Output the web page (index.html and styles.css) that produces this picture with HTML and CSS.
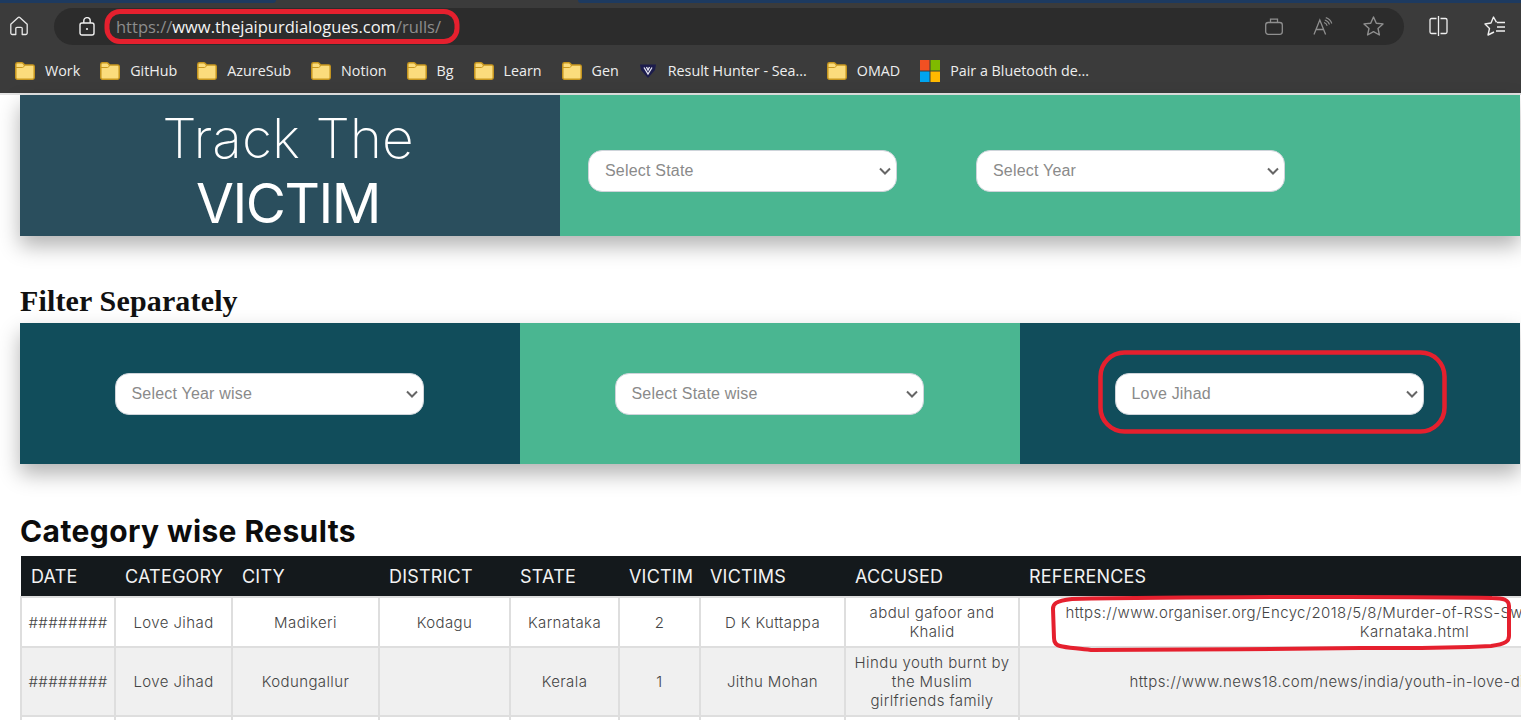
FILE: index.html
```html
<!DOCTYPE html>
<html lang="en">
<head>
    <meta charset="UTF-8">
    <meta name="viewport" content="width=device-width, initial-scale=1.0">
    <title>Track The Victim</title>
    <link rel="stylesheet" href="styles.css">
</head>
<body>
    <svg width="0" height="0" class="defs">
        <symbol id="folder" viewBox="0 0 20 18">
            <path d="M.8 2.500C.8 1.500 1.500.8 2.500.8h4.300c.5 0 .9.2 1.200.5L9.600 3h8c1 0 1.600.6 1.600 1.600v10.900c0 1-.6 1.700-1.600 1.700H2.500c-1 0-1.700-.7-1.700-1.700z" fill="#fbdc7c" stroke="#c9981f" stroke-width="1.500"/>
            <path d="M1 5.500h6.500c.8 0 1.300-.3 2-2.500" fill="none" stroke="#c9981f" stroke-width="1"/>
        </symbol>
    </svg>

    <div class="tabstrip">
        <div class="tab-left"></div>
        <div class="tab-right"></div>
    </div>
    <div class="toolbar">
        <svg class="home" width="20" height="20" viewBox="0 0 20 20" fill="none" stroke="#e8e8e8" stroke-width="1.300">
            <path d="M1.800 8.300 8.900 1.700a1.600 1.600 0 0 1 2.200 0l7.100 6.600V17a1.500 1.500 0 0 1-1.500 1.500h-3.500V12.500a1.200 1.200 0 0 0-1.200-1.200H8a1.200 1.200 0 0 0-1.200 1.200v6H3.300A1.500 1.500 0 0 1 1.800 17z" stroke-linejoin="round"/>
        </svg>
        <div class="addressbar">
            <svg class="lock" width="16" height="19" viewBox="0 0 16 19" fill="none" stroke="#f0f0f0" stroke-width="1.400">
                <rect x="1" y="6" width="14" height="12" rx="2"/>
                <path d="M4.800 6V3.800a3.200 3.200 0 0 1 6.400 0V6"/>
                <circle cx="8" cy="12" r="1.100" fill="#f0f0f0" stroke="none"/>
            </svg>
            <div class="url"><span class="dim">https://</span>www.thejaipurdialogues.com<span class="dim">/rulls/</span></div>
            <div class="bar-icons">
                <svg width="18" height="17" viewBox="0 0 18 17" fill="none" stroke="#8f8f8f" stroke-width="1.300">
                    <rect x=".7" y="4.500" width="16.600" height="11.800" rx="2.500"/>
                    <path d="M5.500 4.500V1.200h7v3.300"/>
                </svg>
                <svg width="20" height="18" viewBox="0 0 20 18" fill="none" stroke="#8f8f8f" stroke-width="1.300">
                    <path d="M1 17.500 6.800 3l5.800 14.500M3 12.500h7.600"/>
                    <path d="M11 5.500c1.500.5 2.600 1.500 3.200 3.200M11.800 3c2.300.6 3.900 2.200 4.700 4.500M12.800 .6c2.900.8 5 2.900 6 5.900" stroke-width="1.100"/>
                </svg>
                <svg width="21" height="20" viewBox="0 0 21 20" fill="none" stroke="#8f8f8f" stroke-width="1.400">
                    <path d="m10.500 1 2.800 6.200 6.700.7-5 4.500 1.400 6.600-5.900-3.400L4.600 19 6 12.400 1 7.900l6.700-.7z" stroke-linejoin="round"/>
                </svg>
            </div>
        </div>
        <div class="tool-icons">
            <svg width="19" height="20" viewBox="0 0 19 20" fill="none" stroke="#efefef" stroke-width="1.300">
                <path d="M7.500 2.500H2.500a1.500 1.500 0 0 0-1.500 1.500v12a1.500 1.500 0 0 0 1.500 1.500h5M11.500 2.500h5a1.500 1.500 0 0 1 1.500 1.500v12a1.500 1.500 0 0 1-1.500 1.500h-5"/>
                <path d="M9.500 0v20"/>
            </svg>
            <svg width="21" height="20" viewBox="0 0 21 20" fill="none" stroke="#efefef" stroke-width="1.400">
                <path d="M12.500 6.300 9.500 1 7 7 1 8l4.500 4.500L4 19l6-3" stroke-linejoin="round"/>
                <path d="M13 6.500h8M13 11h8M12 15h9"/>
            </svg>
        </div>
    </div>
    <div class="bookmarks">
        <div class="bookmark"><svg width="20" height="18"><use href="#folder"/></svg>Work</div>
        <div class="bookmark"><svg width="20" height="18"><use href="#folder"/></svg>GitHub</div>
        <div class="bookmark"><svg width="20" height="18"><use href="#folder"/></svg>AzureSub</div>
        <div class="bookmark"><svg width="20" height="18"><use href="#folder"/></svg>Notion</div>
        <div class="bookmark"><svg width="20" height="18"><use href="#folder"/></svg>Bg</div>
        <div class="bookmark"><svg width="20" height="18"><use href="#folder"/></svg>Learn</div>
        <div class="bookmark"><svg width="20" height="18"><use href="#folder"/></svg>Gen</div>
        <div class="bookmark">
            <svg class="shield" width="16" height="14" viewBox="0 0 16 14">
                <path d="M0 .5h16L15 6l-7 8-7-8z" fill="#1c1c4c"/>
                <path d="M4 3.500 8 10l4-6.500M6.500 3 8 6l1.500-3" fill="none" stroke="#e8e8f4" stroke-width="1.300"/>
            </svg>Result Hunter - Sea...
        </div>
        <div class="bookmark"><svg width="20" height="18"><use href="#folder"/></svg>OMAD</div>
        <div class="bookmark">
            <svg width="20" height="22" viewBox="0 0 20 22">
                <rect width="9.500" height="10.500" fill="#f25022"/>
                <rect x="10.500" width="9.500" height="10.500" fill="#7fba00"/>
                <rect y="11.500" width="9.500" height="10.500" fill="#00a4ef"/>
                <rect x="10.500" y="11.500" width="9.500" height="10.500" fill="#ffb900"/>
            </svg>Pair a Bluetooth de...
        </div>
    </div>

    <div class="page">
        <div class="track panel">
            <div class="track-title">
                <div class="track-the">Track The</div>
                <div class="track-victim">VICTIM</div>
            </div>
            <div class="track-filters">
                <select class="picker"><option>Select State</option></select>
                <select class="picker"><option>Select Year</option></select>
            </div>
        </div>

        <h2 class="filter-heading">Filter Separately</h2>
        <div class="separate panel">
            <div class="sep-col dark"><select class="picker"><option>Select Year wise</option></select></div>
            <div class="sep-col green"><select class="picker"><option>Select State wise</option></select></div>
            <div class="sep-col dark"><select class="picker"><option>Love Jihad</option></select></div>
        </div>

        <h2 class="results-heading">Category wise Results</h2>
        <table class="results">
            <colgroup>
                <col class="c-date"><col class="c-cat"><col class="c-city"><col class="c-dist"><col class="c-state">
                <col class="c-vic"><col class="c-vics"><col class="c-acc"><col class="c-ref">
            </colgroup>
            <thead>
                <tr>
                    <th>DATE</th><th>CATEGORY</th><th>CITY</th><th>DISTRICT</th><th>STATE</th>
                    <th>VICTIM</th><th>VICTIMS</th><th>ACCUSED</th><th>REFERENCES</th>
                </tr>
            </thead>
            <tbody>
                <tr>
                    <td>########</td><td>Love Jihad</td><td>Madikeri</td><td>Kodagu</td><td>Karnataka</td>
                    <td>2</td><td>D K Kuttappa</td><td>abdul gafoor and<br>Khalid</td>
                    <td>https://www.organiser.org/Encyc/2018/5/8/Murder-of-RSS-Swayamsevak-in-Madikeri-Kodagu-<br>Karnataka.html</td>
                </tr>
                <tr class="even">
                    <td>########</td><td>Love Jihad</td><td>Kodungallur</td><td></td><td>Kerala</td>
                    <td>1</td><td>Jithu Mohan</td><td>Hindu youth burnt by<br>the Muslim<br>girlfriends family</td>
                    <td>https://www.news18.com/news/india/youth-in-love-dies-of-burns-kerala.html</td>
                </tr>
                <tr class="blank">
                    <td></td><td></td><td></td><td></td><td></td><td></td><td></td><td></td><td></td>
                </tr>
            </tbody>
        </table>
    </div>

    <!-- red marker rings drawn over the screenshot -->
    <svg class="marks" width="1521" height="720" viewBox="0 0 1521 720" fill="none" stroke="#e5202e" stroke-width="4">
        <rect x="107" y="11.500" width="350" height="30" rx="13" stroke-width="5"/>
        <rect x="1100.500" y="352.500" width="344" height="79" rx="24" stroke-width="4.500"/>
        <path d="M1072 599c100-2 330-3 420-1 12 0 17 2 17 8v30c0 5-3 8-18 10-60 3-100 2-130 2-80 1-200 2-270 2-14-2-24-2-31-4-4-1-6-3-6-8l-1-29c0-5 2-8 19-10z"/>
    </svg>
</body>
</html>
```

FILE: styles.css
```css
* {
    box-sizing: border-box;
}
html, body {
    height: 720px;
    overflow: hidden;
}
body {
    margin: 0;
    background: #fff;
    font-family: Inter, "Open Sans", sans-serif;
    position: relative;
}
.defs {
    display: none;
}

/* browser chrome */
.tabstrip {
    display: flex;
    height: 3px;
    background: #3b3b3b;
}
.tab-left {
    width: 276px;
    background: #1d3a60;
    border-bottom-right-radius: 3px;
}
.tab-right {
    flex: 1;
    margin-left: 302px;
    background: #1d3a60;
    border-bottom-left-radius: 3px;
}
.toolbar {
    display: flex;
    align-items: center;
    height: 43px;
    padding: 3px 16px 0 9px;
    background: #3b3b3b;
}
.home {
    flex: none;
}
.addressbar {
    display: flex;
    align-items: center;
    width: 1350px;
    height: 37px;
    margin-left: 25px;
    padding: 0 20px 0 25px;
    border-radius: 19px;
    background: #2c2c2c;
}
.url {
    flex: 1;
    margin-left: 21px;
    padding-top: 1px;
    font-family: "Open Sans", sans-serif;
    font-size: 16.500px;
    color: #f4f4f4;
}
.dim {
    color: #8d8d8d;
}
.bar-icons {
    display: flex;
    align-items: center;
    gap: 30px;
}
.tool-icons {
    display: flex;
    align-items: center;
    gap: 36px;
    margin-left: 25px;
}
.bookmarks {
    display: flex;
    align-items: center;
    gap: 20px;
    height: 49px;
    padding: 2px 0 0 15px;
    background: #3b3b3b;
    border-bottom: 2px solid #e4e4e4;
    font-family: "Open Sans", sans-serif;
    font-size: 14.300px;
    color: #eee;
}
.bookmark {
    display: flex;
    align-items: center;
    gap: 10px;
}
.shield {
    margin: 0 2px 0 1px;
}

/* page */
.page {
    width: 1500px;
    margin-left: 20px;
}
.panel {
    display: flex;
    height: 141px;
    box-shadow: 0 10px 20px rgba(0, 0, 0, .3);
}
.track-title {
    width: 540px;
    padding-right: 4px;
    overflow: hidden;
    background: #2a4e5d;
    color: #fff;
    text-align: center;
}
.track-the {
    margin-top: 10px;
    font-size: 55px;
    font-weight: 200;
    line-height: 66px;
}
.track-victim {
    font-size: 55px;
    font-weight: 400;
    line-height: 64px;
    letter-spacing: -1.500px;
}
.track-filters {
    display: flex;
    align-items: center;
    gap: 79px;
    flex: 1;
    padding: 10px 0 0 28px;
    background: #4ab691;
}
.picker {
    appearance: none;
    width: 309px;
    height: 42px;
    padding: 0 30px 0 16px;
    border: 1px solid #ced4da;
    border-radius: 14px;
    background: #fff url("data:image/svg+xml,%3Csvg xmlns='http://www.w3.org/2000/svg' width='12' height='8' viewBox='0 0 12 8'%3E%3Cpath d='M1 1.500l5 5 5-5' fill='none' stroke='%23666' stroke-width='2'/%3E%3C/svg%3E") no-repeat right 5px center;
    color: #8a8a8a;
    font-family: "Liberation Sans", Arial, sans-serif;
    font-size: 16px;
    letter-spacing: .2px;
}
.filter-heading {
    margin: 48px 0 5px;
    font-family: "Liberation Serif", serif;
    font-size: 30px;
    font-weight: 700;
    line-height: 34px;
    letter-spacing: .15px;
    color: #111;
}
.sep-col {
    display: flex;
    align-items: center;
    justify-content: center;
    width: 500px;
    padding-right: 2px;
}
.dark {
    background: #114d5b;
}
.green {
    background: #4ab691;
}
.results-heading {
    margin: 49px 0 6px;
    font-size: 30px;
    font-weight: 700;
    line-height: 37px;
    letter-spacing: .4px;
    color: #0c0c0c;
}

/* results table */
.results {
    table-layout: fixed;
    width: 1789px;
    border-collapse: collapse;
    color: #444;
    font-size: 15px;
    font-weight: 300;
    line-height: 19px;
    letter-spacing: .4px;
}
.c-date { width: 94px; }
.c-cat { width: 117px; }
.c-city { width: 147px; }
.c-dist { width: 131px; }
.c-state { width: 109px; }
.c-vic { width: 81px; }
.c-vics { width: 145px; }
.c-acc { width: 174px; }
.c-ref { width: 791px; }
.results th {
    height: 41px;
    padding: 0 0 0 10px;
    background: #14191c;
    color: #f2f2f2;
    font-size: 18px;
    font-weight: 400;
    letter-spacing: .2px;
    text-align: left;
    white-space: nowrap;
}
.results td {
    padding: 5px;
    border: 2px solid #dedede;
    text-align: center;
    white-space: nowrap;
}
.results .even td {
    background: #f0f0f0;
}
.results .blank td {
    height: 40px;
}
.marks {
    position: absolute;
    left: 0;
    top: 0;
    pointer-events: none;
}
```
